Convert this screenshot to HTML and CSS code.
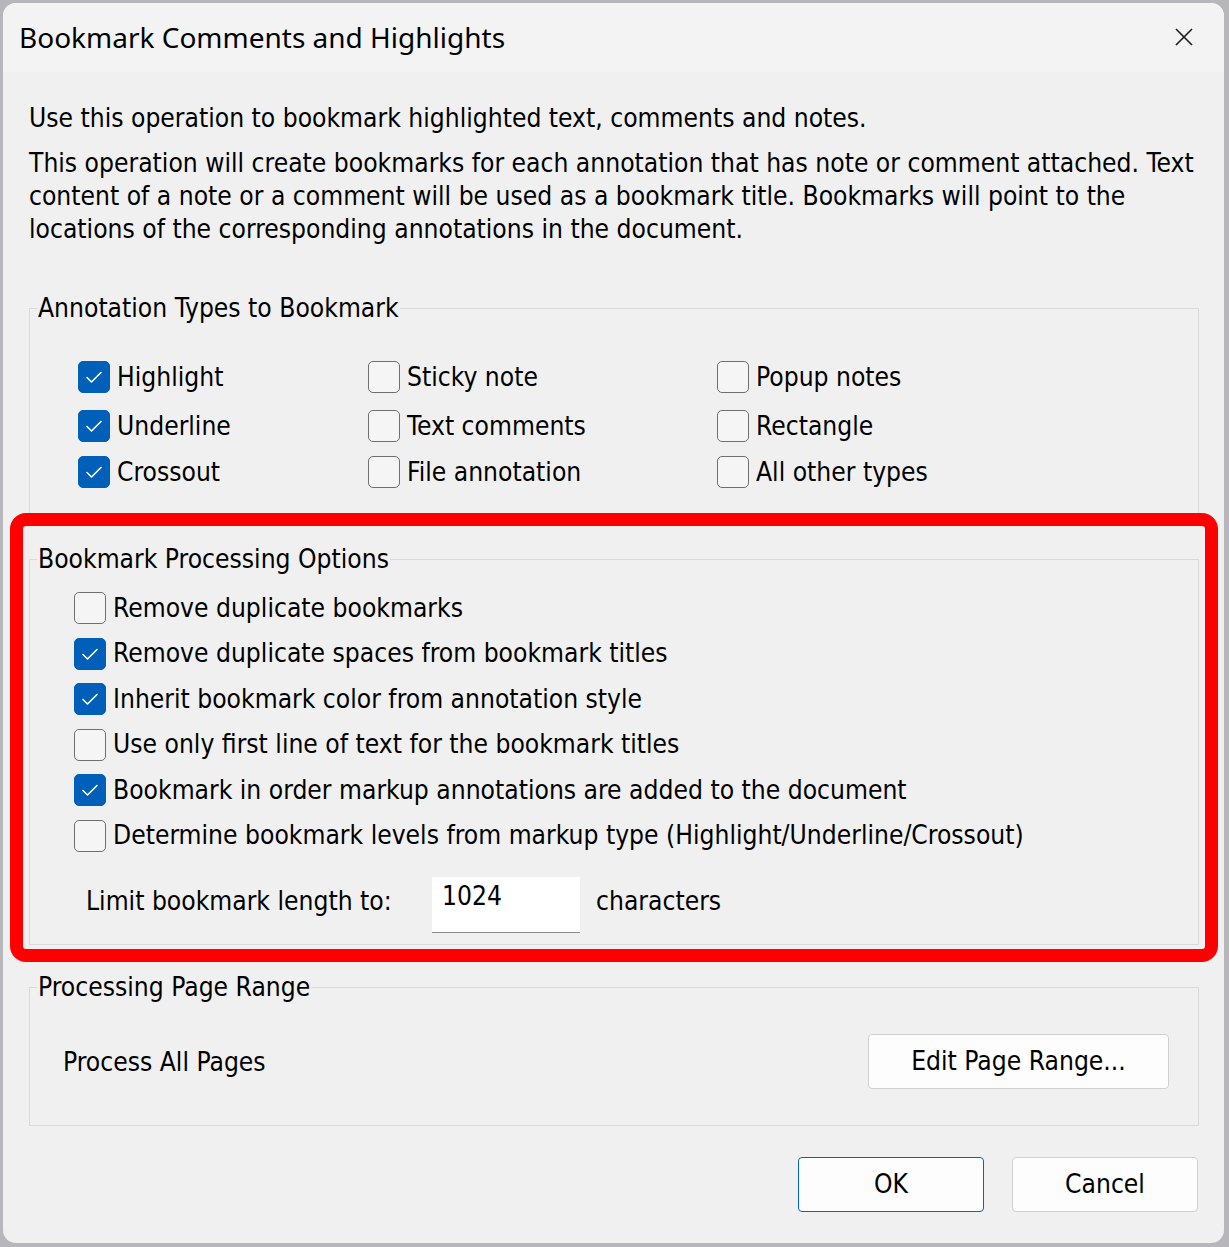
FILE: index.html
```html
<!DOCTYPE html>
<html lang="en">
<head>
<meta charset="utf-8">
<title>Bookmark Comments and Highlights</title>
<link rel="stylesheet" href="styles.css">
</head>
<body>
<div class="dialog">
  <div class="titlebar">
    <span class="title">Bookmark Comments and Highlights</span>
    <svg class="close" viewBox="0 0 18 18" width="18" height="18" aria-hidden="true">
      <path d="M1 1 L17 17 M17 1 L1 17" />
    </svg>
  </div>
  <div class="content">
    <p class="intro">Use this operation to bookmark highlighted text, comments and notes.</p>
    <p class="intro para">This operation will create bookmarks for each annotation that has note or comment attached. Text<br>content of a note or a comment will be used as a bookmark title. Bookmarks will point to the<br>locations of the corresponding annotations in the document.</p>

    <fieldset class="group group-types">
      <legend>Annotation Types to Bookmark</legend>
      <div class="types-grid">
        <label class="check"><span class="box checked"><svg viewBox="0 0 32 32"><path d="M9 16.5 L13.5 21 L23 11.5"/></svg></span><span>Highlight</span></label>
        <label class="check"><span class="box"></span><span>Sticky note</span></label>
        <label class="check"><span class="box"></span><span>Popup notes</span></label>
        <label class="check"><span class="box checked"><svg viewBox="0 0 32 32"><path d="M9 16.5 L13.5 21 L23 11.5"/></svg></span><span>Underline</span></label>
        <label class="check"><span class="box"></span><span>Text comments</span></label>
        <label class="check"><span class="box"></span><span>Rectangle</span></label>
        <label class="check"><span class="box checked"><svg viewBox="0 0 32 32"><path d="M9 16.5 L13.5 21 L23 11.5"/></svg></span><span>Crossout</span></label>
        <label class="check"><span class="box"></span><span>File annotation</span></label>
        <label class="check"><span class="box"></span><span>All other types</span></label>
      </div>
    </fieldset>

    <fieldset class="group group-options">
      <legend>Bookmark Processing Options</legend>
      <div class="options-list">
        <label class="check"><span class="box"></span><span>Remove duplicate bookmarks</span></label>
        <label class="check"><span class="box checked"><svg viewBox="0 0 32 32"><path d="M9 16.5 L13.5 21 L23 11.5"/></svg></span><span>Remove duplicate spaces from bookmark titles</span></label>
        <label class="check"><span class="box checked"><svg viewBox="0 0 32 32"><path d="M9 16.5 L13.5 21 L23 11.5"/></svg></span><span>Inherit bookmark color from annotation style</span></label>
        <label class="check"><span class="box"></span><span>Use only first line of text for the bookmark titles</span></label>
        <label class="check"><span class="box checked"><svg viewBox="0 0 32 32"><path d="M9 16.5 L13.5 21 L23 11.5"/></svg></span><span>Bookmark in order markup annotations are added to the document</span></label>
        <label class="check"><span class="box"></span><span>Determine bookmark levels from markup type (Highlight/Underline/Crossout)</span></label>
      </div>
      <div class="limit-row">
        <span class="limit-label">Limit bookmark length to:</span>
        <span class="text-input">1024</span>
        <span class="limit-unit">characters</span>
      </div>
    </fieldset>

    <fieldset class="group group-range">
      <legend>Processing Page Range</legend>
      <div class="range-row">
        <span>Process All Pages</span>
        <button class="btn btn-range" type="button">Edit Page Range...</button>
      </div>
    </fieldset>
  </div>
  <div class="footer">
    <button class="btn btn-dialog btn-default" type="button">OK</button>
    <button class="btn btn-dialog" type="button">Cancel</button>
  </div>
  <div class="highlight-frame"></div>
</div>
</body>
</html>
```

FILE: styles.css
```css
* { box-sizing: border-box; }

html, body {
  margin: 0;
  padding: 0;
}

body {
  background: #b7b7bb;
  font-family: "DejaVu Sans Condensed", "DejaVu Sans", sans-serif;
  font-size: 26.2px;
  line-height: 33px;
  color: #000;
  width: 1229px;
  height: 1247px;
  overflow: hidden;
}

.dialog {
  position: relative;
  margin: 3px 0 0 3px;
  width: 1221px;
  height: 1240px;
  background: #f0f0f0;
  border-radius: 13px;
  display: flex;
  flex-direction: column;
}

.titlebar {
  height: 69px;
  flex: none;
  background: #f3f3f3;
  border-radius: 13px 13px 0 0;
  display: flex;
  align-items: center;
  justify-content: space-between;
  padding: 0 31px 0 16px;
}

.title {
  font-family: "Noto Sans", "Open Sans", sans-serif;
  font-size: 28px;
  line-height: 38px;
  color: #000;
  margin-top: -2px;
}

.close {
  width: 18px;
  height: 18px;
  margin-top: -2px;
}
.close path {
  stroke: #1a1a1a;
  stroke-width: 1.6;
  fill: none;
}

.content {
  padding: 30px 25px 0 26px;
}

.intro {
  margin: 0;
  white-space: nowrap;
}
.intro.para {
  margin-top: 12px;
}

.group {
  margin: 0;
  border: 1px solid #dadada;
  min-inline-size: 0;
  padding: 0;
}
.group legend {
  padding: 0 1px;
  margin-left: 7px;
  line-height: 33px;
}

.group-types {
  margin-top: 46px;
  padding: 36px 0 28px 0;
}

.types-grid {
  display: grid;
  grid-template-columns: 290px 349px auto;
  grid-template-rows: 49px 46px 32px;
  align-items: start;
  padding-left: 48px;
}

.check {
  display: flex;
  align-items: center;
  gap: 7px;
  height: 32px;
  white-space: nowrap;
}

.box {
  flex: none;
  width: 32px;
  height: 32px;
  border: 1.5px solid #6f6f6f;
  border-radius: 5px;
  background: #f5f5f5;
  display: flex;
  align-items: center;
  justify-content: center;
}
.box.checked {
  background: #005fb8;
  border-color: #005fb8;
}
.box svg {
  width: 32px;
  height: 32px;
  flex: none;
}
.box svg path {
  stroke: #fff;
  stroke-width: 1.6;
  fill: none;
  stroke-linecap: round;
  stroke-linejoin: round;
}

.group-options {
  margin-top: 26px;
  padding: 16px 0 11px 0;
}

.options-list {
  display: flex;
  flex-direction: column;
  gap: 13.6px;
  padding-left: 44px;
}

.limit-row {
  margin-top: 25px;
  padding-left: 56px;
  display: flex;
  align-items: center;
  height: 56px;
}
.limit-label {
  width: 346px;
  margin-top: -6px;
}
.text-input {
  width: 148px;
  height: 56px;
  background: #fff;
  border-bottom: 1px solid #8d8d8d;
  padding: 3px 0 0 10px;
  margin-right: 16px;
}
.limit-unit {
  margin-top: -6px;
}

.group-range {
  margin-top: 26px;
  padding: 30px 0 36px 0;
}
.range-row {
  display: flex;
  align-items: center;
  justify-content: space-between;
  height: 55px;
  padding: 0 29px 0 33px;
}
.range-row > span {
  margin-top: 3px;
}

.btn {
  font-family: inherit;
  font-size: inherit;
  line-height: 33px;
  color: #000;
  background: #fdfdfd;
  border: 1px solid #d0d0d0;
  border-radius: 4px;
  padding: 0;
  height: 55px;
}
.btn-range {
  width: 301px;
}

.footer {
  margin-top: 31px;
  padding-right: 26px;
  display: flex;
  justify-content: flex-end;
  gap: 28px;
}
.btn-dialog {
  width: 186px;
}
.btn-default {
  border-color: #0067c0;
}

.highlight-frame {
  position: absolute;
  left: 7px;
  top: 510px;
  width: 1208px;
  height: 449px;
  border: 13px solid #ff0000;
  border-radius: 16px;
  pointer-events: none;
}
```
